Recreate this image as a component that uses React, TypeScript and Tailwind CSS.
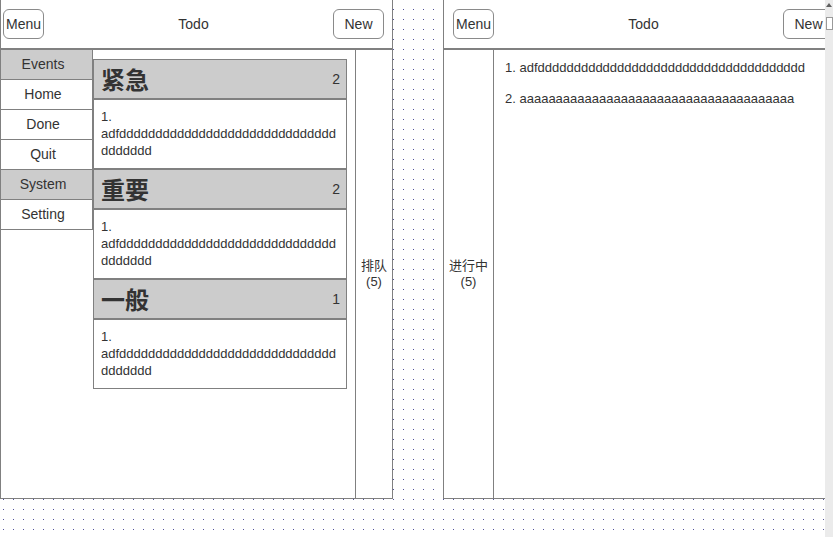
import React from "react";

const longText = "adf" + "d".repeat(37);

function Header({ right }: { right?: boolean }) {
  return (
    <div
      className={`flex h-[50px] shrink-0 items-center border-b-2 border-[#808080] bg-white ${
        right ? "pl-[9px]" : "pl-[2px]"
      }`}
    >
      <button className="flex h-[30px] w-[41px] shrink-0 items-center justify-center rounded-[6px] border border-[#8a8a8a] bg-white text-[14px] text-[#333]">
        Menu
      </button>
      <span className="flex-1 pl-[10px] text-center text-[14px] text-[#333]">Todo</span>
      <button
        className={`flex h-[30px] w-[51px] shrink-0 items-center justify-center rounded-[6px] border border-[#8a8a8a] bg-white text-[14px] text-[#333] ${
          right ? "mr-[10px]" : "mr-[8px]"
        }`}
      >
        New
      </button>
    </div>
  );
}

function NavItem({ label, active }: { label: string; active?: boolean }) {
  return (
    <div
      className={`flex h-[30px] items-center justify-center border-b border-[#808080] pr-[7px] text-[14px] text-[#333] ${
        active ? "bg-[#cccccc]" : "bg-white"
      }`}
    >
      {label}
    </div>
  );
}

function Group({ title, count }: { title: string; count: number }) {
  return (
    <>
      <div className="flex h-[40px] items-center justify-between border border-[#808080] bg-[#cccccc] pl-[7px] pr-[6px]">
        <span
          className="text-[24px] font-bold text-[#333]"
          style={{ fontFamily: '"Noto Sans CJK SC", sans-serif' }}
        >
          {title}
        </span>
        <span className="text-[14px] text-[#333]">{count}</span>
      </div>
      <div className="h-[70px] border border-[#808080] bg-white px-[7px] pt-[8px] text-[13px] leading-[17px] text-[#333] break-words">
        1. {longText}
      </div>
    </>
  );
}

export default function App() {
  return (
    <div
      className="relative flex h-[537px] w-[833px] overflow-hidden bg-white bg-[linear-gradient(90deg,transparent_1px,#fff_1px),linear-gradient(#50509a_1px,#fff_1px)] bg-[size:10px_10px] bg-[position:3px_9px]"
      style={{ fontFamily: '"Liberation Sans", Arial, "Noto Sans CJK SC", sans-serif' }}
    >
      {/* Left panel */}
      <div className="flex h-[499px] w-[393px] shrink-0 flex-col border-x border-b border-[#808080] bg-white">
        <Header />
        <div className="flex flex-1">
          <div className="w-[92px] shrink-0">
            <div className="border-r border-[#808080]">
              <NavItem label="Events" active />
              <NavItem label="Home" />
              <NavItem label="Done" />
              <NavItem label="Quit" />
              <NavItem label="System" active />
              <NavItem label="Setting" />
            </div>
          </div>
          <div className="flex w-[262px] shrink-0 flex-col pr-[8px] pt-[9px]">
            <Group title="紧急" count={2} />
            <Group title="重要" count={2} />
            <Group title="一般" count={1} />
          </div>
          <div className="flex flex-1 flex-col items-center justify-center border-l border-[#808080] text-[13px] leading-[16px] text-[#333]">
            <span>排队</span>
            <span>(5)</span>
          </div>
        </div>
      </div>

      {/* gap */}
      <div className="w-[50px] shrink-0" />

      {/* Right panel (clipped) */}
      <div className="flex-1 overflow-hidden">
        <div className="flex h-[499px] w-[401px] flex-col border-b border-l border-[#808080] bg-white">
          <Header right />
          <div className="flex flex-1">
            <div className="flex w-[50px] shrink-0 flex-col items-center justify-center border-r border-[#808080] text-[13px] leading-[16px] text-[#333]">
              <span>进行中</span>
              <span>(5)</span>
            </div>
            <div className="flex-1 pl-[11px] pt-[9px] text-[13px] leading-[17px] text-[#333]">
              <div className="h-[31px] whitespace-nowrap">1. {"adf" + "d".repeat(37)}</div>
              <div className="whitespace-nowrap">2. {"a".repeat(38)}</div>
            </div>
          </div>
        </div>
      </div>

      {/* Scrollbar */}
      <div className="relative h-full w-[8px] shrink-0 bg-[#ebebeb]">
        <svg className="absolute left-[1px] top-[3px]" width="6" height="4" viewBox="0 0 6 4">
          <path d="M3 0 L6 4 L0 4 Z" fill="#606060" />
        </svg>
        <div className="absolute left-[1px] top-[17px] h-[13px] w-[7px] border border-[#9a9a9a] bg-white" />
      </div>
    </div>
  );
}
